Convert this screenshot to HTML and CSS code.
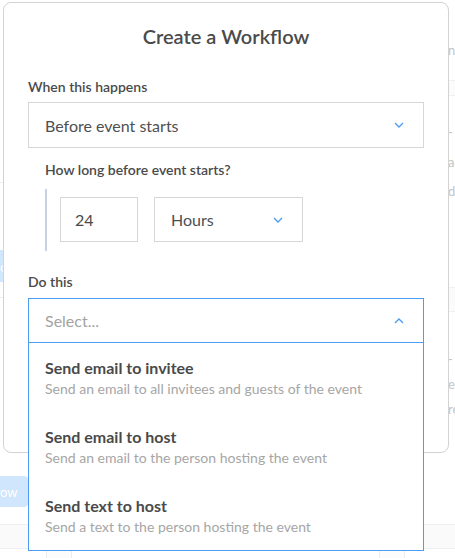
FILE: index.html
```html
<!DOCTYPE html>
<html>
<head>
<meta charset="utf-8">
<link rel="stylesheet" href="styles.css">
</head>
<body>
<div class="page">
  <div class="page-top">
    <div class="ghost-left">
      <div class="gl-line gl-line-1"></div>
      <div class="gl-btn gl-btn-1">c</div>
      <div class="gl-line gl-line-2"></div>
      <div class="gl-btn gl-btn-2">ow</div>
    </div>
    <div class="ghost-right">
      <div class="gr-text gr-t1">n.</div>
      <div class="gr-band gr-band-1"></div>
      <div class="gr-text gr-t2">-</div>
      <div class="gr-text gr-t3">al</div>
      <div class="gr-text gr-t4">d</div>
      <div class="gr-band gr-band-2"></div>
      <div class="gr-text gr-t5">-</div>
      <div class="gr-text gr-t6">ee</div>
      <div class="gr-text gr-t7">re</div>
    </div>
  </div>
  <div class="page-band"></div>
  <div class="page-cells">
    <div class="cell cell-a"></div>
    <div class="cell cell-b"></div>
  </div>
</div>

<div class="modal">
  <h1 class="modal-title">Create a Workflow</h1>

  <div class="field-label">When this happens</div>
  <div class="select">
    <span class="select-value">Before event starts</span>
    <svg class="chev" width="10" height="6" viewBox="0 0 10 6"><path d="M1 1 L5 5 L9 1" fill="none" stroke="#4a9df2" stroke-width="1.3"/></svg>
  </div>

  <div class="sub">
    <div class="sub-label">How long before event starts?</div>
    <div class="sub-bar">
      <div class="num-input">24</div>
      <div class="select select-small">
        <span class="select-value">Hours</span>
        <svg class="chev" width="10" height="6" viewBox="0 0 10 6"><path d="M1 1 L5 5 L9 1" fill="none" stroke="#4a9df2" stroke-width="1.3"/></svg>
      </div>
    </div>
  </div>

  <div class="field-label field-label-2">Do this</div>
  <div class="select-wrap">
    <div class="select select-open">
      <span class="select-placeholder">Select...</span>
      <svg class="chev" width="10" height="6" viewBox="0 0 10 6"><path d="M1 5 L5 1 L9 5" fill="none" stroke="#4a9df2" stroke-width="1.3"/></svg>
    </div>
    <ul class="menu">
      <li class="menu-item">
        <div class="menu-title">Send email to invitee</div>
        <div class="menu-desc">Send an email to all invitees and guests of the event</div>
      </li>
      <li class="menu-item">
        <div class="menu-title">Send email to host</div>
        <div class="menu-desc">Send an email to the person hosting the event</div>
      </li>
      <li class="menu-item">
        <div class="menu-title">Send text to host</div>
        <div class="menu-desc">Send a text to the person hosting the event</div>
      </li>
    </ul>
  </div>
</div>
</body>
</html>
```
FILE: styles.css
```css
* { box-sizing: border-box; }
html, body { margin: 0; padding: 0; }
body {
  width: 455px;
  height: 558px;
  overflow: hidden;
  background: #fff;
  font-family: "Lato", "Open Sans", sans-serif;
  color: #4a4a4a;
  position: relative;
}

/* ---------- faded background page ---------- */
.page {
  display: flex;
  flex-direction: column;
  height: 558px;
}
.page-top {
  height: 524px;
  display: flex;
  justify-content: space-between;
}
.ghost-left {
  width: 30px;
  display: flex;
  flex-direction: column;
}
.gl-line { height: 1px; background: #ececec; }
.gl-line-1 { margin-top: 182px; }
.gl-btn {
  background: #cfe6fc;
  color: #fff;
  font-size: 14px;
  display: flex;
  align-items: center;
  border-radius: 0 4px 4px 0;
}
.gl-btn-1 { margin-top: 67px; height: 32px; width: 10px; }
.gl-line-2 { margin-top: 15px; }
.gl-btn-2 { margin-top: 178px; height: 31px; width: 28px; font-size: 13px; }

.ghost-right {
  width: 7px;
  overflow: hidden;
  display: flex;
  flex-direction: column;
  color: #c4c4c4;
  font-size: 13px;
  line-height: 16px;
}
.gr-text { white-space: nowrap; }
.gr-band { height: 16px; background: #fbfbfb; border-top: 1px solid #f0f0f0; border-bottom: 1px solid #f0f0f0; }
.gr-t1 { margin-top: 42px; }
.gr-band-1 { margin-top: 22px; }
.gr-t2 { margin-top: 28px; }
.gr-t3 { margin-top: 14px; }
.gr-t4 { margin-top: 13px; }
.gr-band-2 { margin-top: 88px; height: 25px; }
.gr-t5 { margin-top: 39px; }
.gr-t6 { margin-top: 9px; }
.gr-t7 { margin-top: 9px; }

.page-band {
  height: 25px;
  background: #fafafa;
  border-top: 1px solid #efefef;
  border-bottom: 1px solid #efefef;
}
.page-cells {
  flex: 1;
  display: flex;
  justify-content: space-between;
  padding: 0 46px;
}
.cell { width: 26px; border-left: 1px solid #eee; border-right: 1px solid #eee; background: #fcfcfc; }
.cell-b { margin-right: 4px; }

/* ---------- modal ---------- */
.modal {
  position: absolute;
  left: 3px;
  top: 2px;
  width: 446px;
  height: 451px;
  background: #fff;
  border: 1px solid #d3d3d3;
  border-radius: 8px;
  padding: 21px 24px 0;
}
.modal-title {
  margin: 0;
  text-align: center;
  font-size: 20px;
  line-height: 24px;
  font-weight: 600;
  color: #4a4a4a;
}
.field-label {
  margin-top: 31px;
  font-size: 14px;
  line-height: 16px;
  font-weight: 600;
  color: #4a4a4a;
}
.field-label-2 { margin-top: 23px; }

.select {
  margin-top: 7px;
  height: 46px;
  border: 1px solid #d6d6d6;
  display: flex;
  align-items: center;
  justify-content: space-between;
  padding: 0 19px 0 16px;
  font-size: 16px;
  color: #4d4f53;
}
.chev { display: block; }

.sub { padding-left: 17px; }
.sub-label {
  margin-top: 14px;
  font-size: 14px;
  line-height: 16px;
  font-weight: 600;
}
.sub-bar {
  margin-top: 11px;
  border-left: 2px solid #c7d2e0;
  padding: 8px 0 9px 13px;
  display: flex;
  gap: 16px;
}
.num-input {
  width: 78px;
  height: 45px;
  border: 1px solid #d6d6d6;
  font-size: 16px;
  padding-left: 14px;
  display: flex;
  align-items: center;
}
.select-small {
  margin-top: 0;
  width: 149px;
  height: 45px;
}

.select-wrap { position: relative; margin-top: 8px; }
.select-open {
  margin-top: 0;
  height: 45px;
  border-color: #4a9df2;
}
.select-placeholder { color: #a3a3a3; }

.menu {
  position: absolute;
  left: 0;
  right: 0;
  top: 45px;
  margin: 0;
  padding: 0;
  list-style: none;
  background: #fff;
  border: 1px solid #4a9df2;
  border-top: none;
}
.menu-item {
  height: 69px;
  padding: 15px 16px 0;
}
.menu-title {
  font-size: 16px;
  line-height: 20px;
  font-weight: 700;
  color: #4a4a4a;
}
.menu-desc {
  margin-top: 2px;
  font-size: 14px;
  line-height: 18px;
  color: #a6a6a6;
}
```
